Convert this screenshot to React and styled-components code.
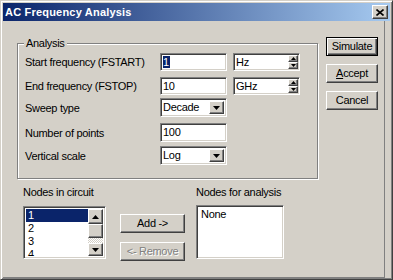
import React from 'react';
import styled, { createGlobalStyle, css } from 'styled-components';

const Global = createGlobalStyle`
  html, body { margin: 0; padding: 0; background: #D4D0C8; }
  body { font-family: "Liberation Sans", Arial, sans-serif; font-size: 11px; letter-spacing: -0.3px; color: #000; }
  * { box-sizing: border-box; }
`;

const FACE = '#D4D0C8';
const SHADOW = '#808080';
const DARK = '#404040';

const raised = css`
  background: ${FACE};
  border: 1px solid;
  border-color: #fff ${DARK} ${DARK} #fff;
  box-shadow: inset -1px -1px 0 ${SHADOW}, inset 1px 1px 0 ${FACE};
`;

const sunken = css`
  background: #fff;
  border: 1px solid;
  border-color: ${SHADOW} #fff #fff ${SHADOW};
  box-shadow: inset 1px 1px 0 ${DARK}, inset -1px -1px 0 ${FACE};
`;

const Window = styled.div`
  width: 393px;
  height: 280px;
  background: ${FACE};
  border: 1px solid;
  border-color: ${FACE} ${DARK} ${DARK} ${FACE};
  box-shadow: inset 1px 1px 0 #fff, inset -1px -1px 0 ${SHADOW};
  padding: 2px 2px 1px 2px;
  display: flex;
  flex-direction: column;
`;

const TitleBar = styled.div`
  height: 18px;
  flex: none;
  display: flex;
  align-items: center;
  justify-content: space-between;
  padding: 0 2px 0 2px;
  background: linear-gradient(to right, #0A246A, #A6CAF0);
`;

const Title = styled.span`
  color: #fff;
  font-weight: bold;
  font-size: 11px;
  letter-spacing: 0.2px;
  line-height: 13px;
  white-space: nowrap;
`;

const CloseButton = styled.div`
  ${raised};
  width: 16px;
  height: 14px;
  display: flex;
  align-items: center;
  justify-content: center;
`;

const Client = styled.div`
  flex: 1;
  display: flex;
  flex-direction: column;
  margin-right: 5px;
  border-right: 1px solid ${SHADOW};
  border-bottom: 1px solid ${SHADOW};
`;

const TopSection = styled.div`
  display: flex;
  align-items: flex-start;
  padding: 16px 0 0 14px;
`;

const GroupBox = styled.div`
  position: relative;
  margin-top: 6px;
  width: 301px;
  height: 136px;
  border: 1px solid ${SHADOW};
  box-shadow: 1px 1px 0 #fff, inset 1px 1px 0 #fff;
  padding: 9px 0 0 7px;
`;

const GroupLabel = styled.span`
  position: absolute;
  top: -7px;
  left: 6px;
  padding: 0 2px;
  line-height: 13px;
  background: ${FACE};
`;

const FormGrid = styled.div`
  display: grid;
  grid-template-columns: 129px 67px 67px;
  grid-template-rows: 24px 21px 25px 23px 19px;
  column-gap: 6px;
`;

const FieldLabel = styled.div`
  align-self: start;
  height: ${p => p.$h}px;
  display: flex;
  align-items: center;
  white-space: nowrap;
`;

const TextField = styled.div`
  ${sunken};
  align-self: start;
  height: ${p => p.$h}px;
  display: flex;
  align-items: center;
  padding: ${p => p.$pad || '0 0 0 2px'};
  overflow: hidden;
  white-space: nowrap;
`;

const FieldText = styled.span`
  flex: 1;
  line-height: 13px;
  overflow: hidden;
`;

const Selected = styled.span`
  background: #0A246A;
  color: #fff;
  margin-left: -1px;
  padding: 0 1px;
`;

const DropButton = styled.div`
  ${raised};
  flex: none;
  width: 15px;
  height: 100%;
  display: flex;
  align-items: center;
  justify-content: center;
`;

const Spin = styled.div`
  flex: none;
  width: 10px;
  height: 100%;
  display: flex;
  flex-direction: column;
`;

const SpinButton = styled.div`
  ${raised};
  flex: 1;
  display: flex;
  align-items: center;
  justify-content: center;
`;

const ButtonColumn = styled.div`
  display: flex;
  flex-direction: column;
  gap: ${p => p.$gap}px;
  margin-left: ${p => p.$ml}px;
  margin-top: ${p => p.$mt || 0}px;
`;

const Button = styled.div`
  ${raised};
  width: ${p => p.$w}px;
  height: 19px;
  display: flex;
  align-items: center;
  justify-content: center;
  white-space: nowrap;
  line-height: 13px;
  ${p => p.$default && css`
    border-color: #000;
    box-shadow: inset 1px 1px 0 #fff, inset -1px -1px 0 ${DARK}, inset -2px -2px 0 ${SHADOW};
  `}
  ${p => p.$disabled && css`
    color: ${SHADOW};
    text-shadow: 1px 1px 0 #fff;
  `}
`;

const Mnemonic = styled.span`
  text-decoration: underline;
`;

const BottomSection = styled.div`
  display: flex;
  align-items: flex-start;
  padding: 7px 0 0 20px;
`;

const Column = styled.div`
  display: flex;
  flex-direction: column;
  margin-left: ${p => p.$ml || 0}px;
`;

const ColumnLabel = styled.div`
  line-height: 13px;
  white-space: nowrap;
  margin-bottom: ${p => p.$mb}px;
`;

const ListBox = styled.div`
  ${sunken};
  width: ${p => p.$w}px;
  height: ${p => p.$h}px;
  padding: 2px;
  display: flex;
  overflow: hidden;
`;

const ListItems = styled.div`
  flex: 1;
  overflow: hidden;
`;

const ListItem = styled.div`
  height: 13px;
  line-height: 13px;
  padding-left: 2px;
  ${p => p.$selected && css`
    background: #0A246A;
    color: #fff;
  `}
`;

const ScrollBar = styled.div`
  flex: none;
  width: 15px;
  display: flex;
  flex-direction: column;
`;

const ScrollButton = styled.div`
  ${raised};
  height: ${p => p.$h}px;
  flex: none;
  display: flex;
  align-items: center;
  justify-content: center;
`;

const ScrollTrack = styled.div`
  flex: 1;
  background: repeating-conic-gradient(#fff 0 25%, ${FACE} 0 50%) 0 0 / 2px 2px;
`;

const Arrow = ({ dir = 'down', w = 7, h = 4 }) => (
  <svg width={w} height={h} viewBox={`0 0 ${w} ${h}`} style={{ display: 'block' }}>
    {dir === 'down' ? (
      <polygon points={`0,0 ${w},0 ${w / 2},${h}`} fill="#000" />
    ) : (
      <polygon points={`0,${h} ${w},${h} ${w / 2},0`} fill="#000" />
    )}
  </svg>
);

const CloseIcon = () => (
  <svg width="8" height="7" viewBox="0 0 8 7" style={{ display: 'block' }}>
    <path d="M0.5 0.5 L7.5 6.5 M7.5 0.5 L0.5 6.5" stroke="#000" strokeWidth="1.6" />
  </svg>
);

const Combo = ({ value, h }) => (
  <TextField $h={h} $pad="2px 2px 2px 2px">
    <FieldText>{value}</FieldText>
    <DropButton><Arrow dir="down" /></DropButton>
  </TextField>
);

const UnitField = ({ value, h }) => (
  <TextField $h={h} $pad="1px 1px 1px 2px">
    <FieldText>{value}</FieldText>
    <Spin>
      <SpinButton><Arrow dir="up" w={5} h={3} /></SpinButton>
      <SpinButton><Arrow dir="down" w={5} h={3} /></SpinButton>
    </Spin>
  </TextField>
);

export default function App() {
  return (
    <>
      <Global />
      <Window>
        <TitleBar>
          <Title>AC Frequency Analysis</Title>
          <CloseButton><CloseIcon /></CloseButton>
        </TitleBar>
        <Client>
          <TopSection>
            <GroupBox>
              <GroupLabel>Analysis</GroupLabel>
              <FormGrid>
                <FieldLabel $h={18}>Start frequency (FSTART)</FieldLabel>
                <TextField $h={18}><FieldText><Selected>1</Selected></FieldText></TextField>
                <UnitField value="Hz" h={18} />

                <FieldLabel $h={18}>End frequency (FSTOP)</FieldLabel>
                <TextField $h={18}><FieldText>10</FieldText></TextField>
                <UnitField value="GHz" h={18} />

                <FieldLabel $h={19}>Sweep type</FieldLabel>
                <Combo value="Decade" h={19} />
                <span />

                <FieldLabel $h={19}>Number of points</FieldLabel>
                <TextField $h={19}><FieldText>100</FieldText></TextField>
                <span />

                <FieldLabel $h={19}>Vertical scale</FieldLabel>
                <Combo value="Log" h={19} />
                <span />
              </FormGrid>
            </GroupBox>
            <ButtonColumn $gap={8} $ml={8}>
              <Button $w={52} $default>Simulate</Button>
              <Button $w={52}><Mnemonic>A</Mnemonic>ccept</Button>
              <Button $w={52}>Cancel</Button>
            </ButtonColumn>
          </TopSection>
          <BottomSection>
            <Column>
              <ColumnLabel $mb={7}>Nodes in circuit</ColumnLabel>
              <ListBox $w={83} $h={53}>
                <ListItems>
                  <ListItem $selected>1</ListItem>
                  <ListItem>2</ListItem>
                  <ListItem>3</ListItem>
                  <ListItem>4</ListItem>
                </ListItems>
                <ScrollBar>
                  <ScrollButton $h={15}><Arrow dir="up" /></ScrollButton>
                  <ScrollButton $h={14} />
                  <ScrollTrack />
                  <ScrollButton $h={13}><Arrow dir="down" /></ScrollButton>
                </ScrollBar>
              </ListBox>
            </Column>
            <ButtonColumn $gap={9} $ml={14} $mt={28}>
              <Button $w={65}>Add -&gt;</Button>
              <Button $w={65} $disabled>&lt;- Remove</Button>
            </ButtonColumn>
            <Column $ml={11}>
              <ColumnLabel $mb={6}>Nodes for analysis</ColumnLabel>
              <ListBox $w={88} $h={54}>
                <ListItems>
                  <ListItem>None</ListItem>
                </ListItems>
              </ListBox>
            </Column>
          </BottomSection>
        </Client>
      </Window>
    </>
  );
}
